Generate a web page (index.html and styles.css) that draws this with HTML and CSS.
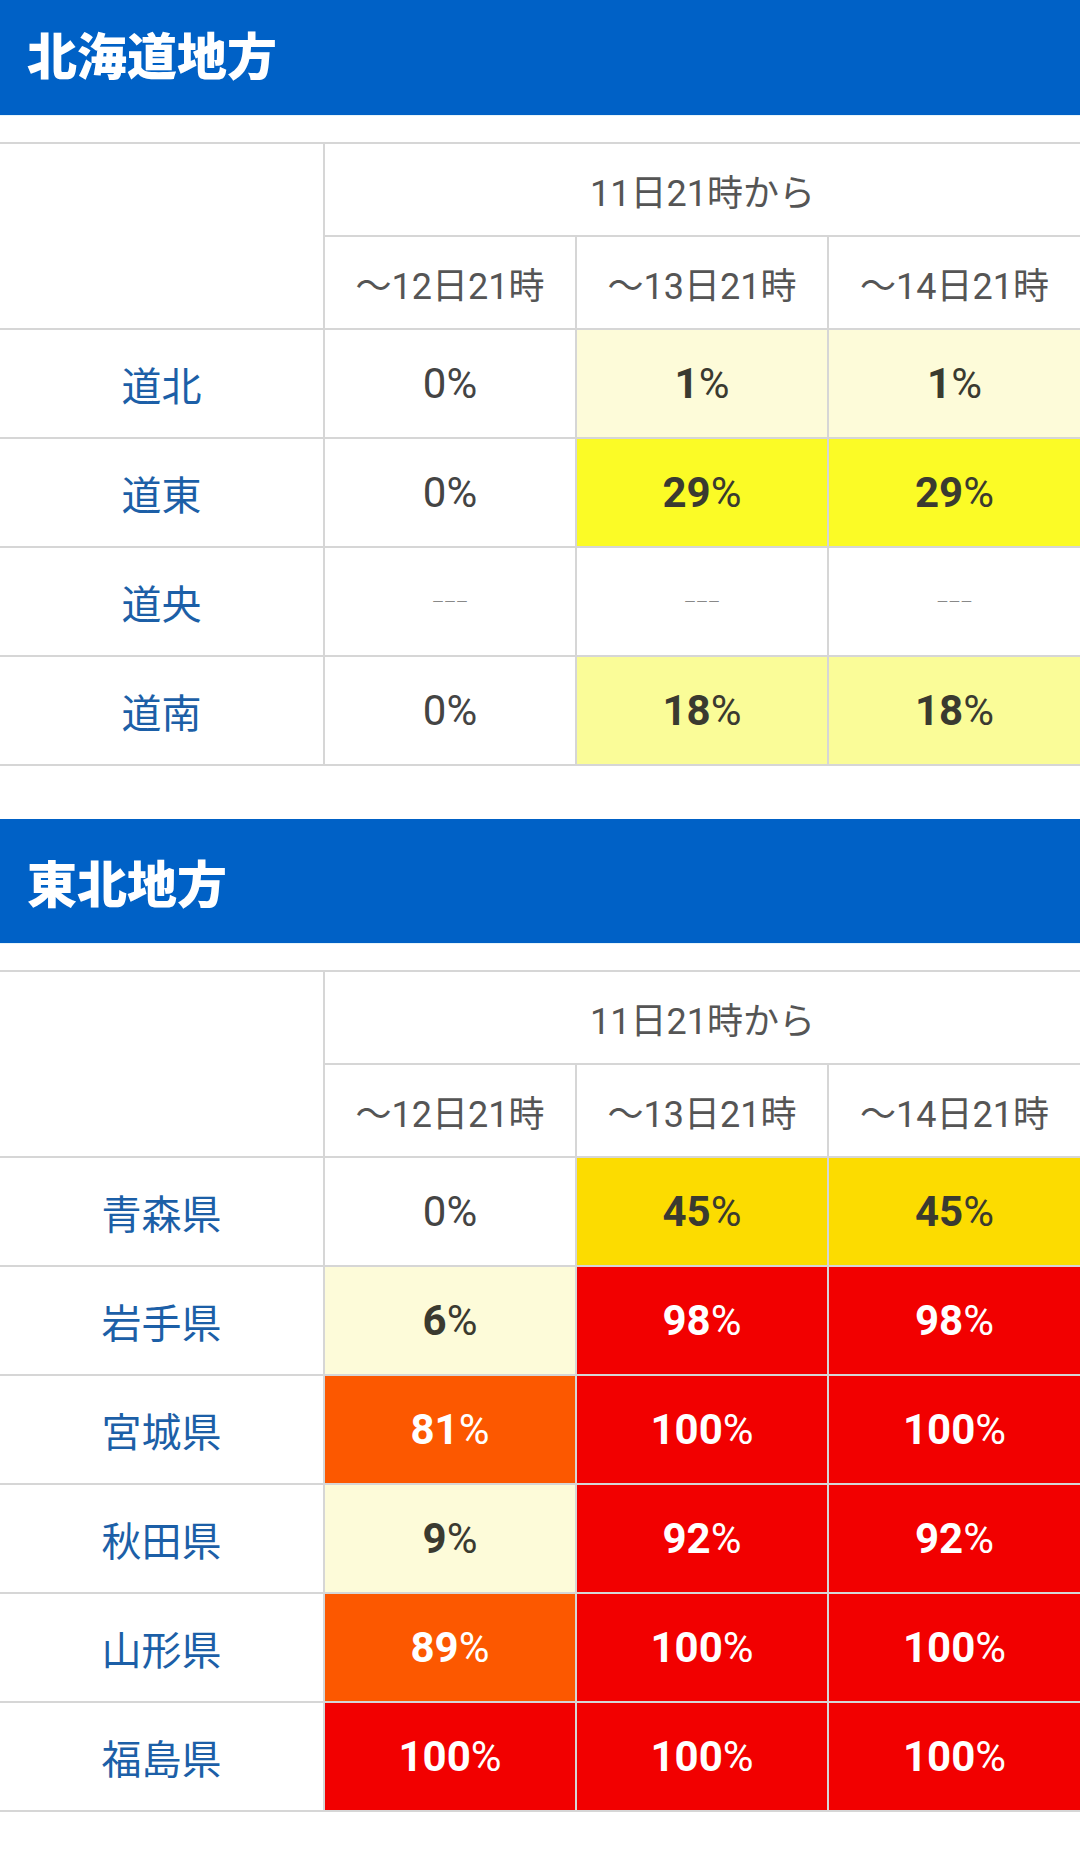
FILE: index.html
```html
<!DOCTYPE html>
<html lang="ja">
<head>
    <meta charset="UTF-8">
    <meta name="viewport" content="width=device-width, initial-scale=1.0">
    <title>地方別 確率</title>
    <link rel="stylesheet" href="styles.css">
</head>
<body>
    <div class="page">

        <!-- 北海道地方 -->
        <section class="area">
            <h2 class="area-title">北海道地方</h2>
            <table class="prob-table">
                <colgroup>
                    <col class="col-name">
                    <col><col><col>
                </colgroup>
                <thead>
                    <tr class="head-row">
                        <th rowspan="2"></th>
                        <th colspan="3">11日21時から</th>
                    </tr>
                    <tr class="head-row">
                        <th>～12日21時</th>
                        <th>～13日21時</th>
                        <th>～14日21時</th>
                    </tr>
                </thead>
                <tbody>
                    <tr>
                        <td class="name">道北</td>
                        <td class="val">0%</td>
                        <td class="val lv1"><b>1</b>%</td>
                        <td class="val lv1"><b>1</b>%</td>
                    </tr>
                    <tr>
                        <td class="name">道東</td>
                        <td class="val">0%</td>
                        <td class="val lv3"><b>29</b>%</td>
                        <td class="val lv3"><b>29</b>%</td>
                    </tr>
                    <tr>
                        <td class="name">道央</td>
                        <td class="val none">ーーー</td>
                        <td class="val none">ーーー</td>
                        <td class="val none">ーーー</td>
                    </tr>
                    <tr>
                        <td class="name">道南</td>
                        <td class="val">0%</td>
                        <td class="val lv2"><b>18</b>%</td>
                        <td class="val lv2"><b>18</b>%</td>
                    </tr>
                </tbody>
            </table>
        </section>

        <!-- 東北地方 -->
        <section class="area">
            <h2 class="area-title">東北地方</h2>
            <table class="prob-table">
                <colgroup>
                    <col class="col-name">
                    <col><col><col>
                </colgroup>
                <thead>
                    <tr class="head-row">
                        <th rowspan="2"></th>
                        <th colspan="3">11日21時から</th>
                    </tr>
                    <tr class="head-row">
                        <th>～12日21時</th>
                        <th>～13日21時</th>
                        <th>～14日21時</th>
                    </tr>
                </thead>
                <tbody>
                    <tr>
                        <td class="name">青森県</td>
                        <td class="val">0%</td>
                        <td class="val lv4"><b>45</b>%</td>
                        <td class="val lv4"><b>45</b>%</td>
                    </tr>
                    <tr>
                        <td class="name">岩手県</td>
                        <td class="val lv1"><b>6</b>%</td>
                        <td class="val lv6"><b>98</b>%</td>
                        <td class="val lv6"><b>98</b>%</td>
                    </tr>
                    <tr>
                        <td class="name">宮城県</td>
                        <td class="val lv5"><b>81</b>%</td>
                        <td class="val lv6"><b>100</b>%</td>
                        <td class="val lv6"><b>100</b>%</td>
                    </tr>
                    <tr>
                        <td class="name">秋田県</td>
                        <td class="val lv1"><b>9</b>%</td>
                        <td class="val lv6"><b>92</b>%</td>
                        <td class="val lv6"><b>92</b>%</td>
                    </tr>
                    <tr>
                        <td class="name">山形県</td>
                        <td class="val lv5"><b>89</b>%</td>
                        <td class="val lv6"><b>100</b>%</td>
                        <td class="val lv6"><b>100</b>%</td>
                    </tr>
                    <tr>
                        <td class="name">福島県</td>
                        <td class="val lv6"><b>100</b>%</td>
                        <td class="val lv6"><b>100</b>%</td>
                        <td class="val lv6"><b>100</b>%</td>
                    </tr>
                </tbody>
            </table>
        </section>

    </div>
</body>
</html>
```

FILE: styles.css
```css
body {
    margin: 0;
    padding: 0;
    background-color: #fff;
    font-family: Roboto, "Noto Sans CJK JP", sans-serif;
    color: #444;
}

.page {
    margin-top: -9px;
}

.area {
    margin-bottom: 53px;
}

.area-title {
    margin: 0 0 26px 0;
    height: 124px;
    padding-left: 27px;
    display: flex;
    align-items: center;
    background-color: #0061c6;
    color: #fff;
    font-family: "Noto Sans CJK JP", sans-serif;
    font-size: 50px;
    font-weight: 900;
    border-bottom: 1px solid #e6f4fa;
}

.prob-table {
    width: 100%;
    table-layout: fixed;
    border-collapse: collapse;
}

.col-name {
    width: 324px;
}

.prob-table th,
.prob-table td {
    border: 2px solid #d6d6d6;
    padding: 0;
    text-align: center;
}

.prob-table tr > :first-child {
    border-left: none;
}

.prob-table tr > :last-child {
    border-right: none;
}

.head-row {
    height: 93px;
}

.head-row th {
    font-weight: 400;
    font-size: 36px;
    color: #555;
}

.prob-table tbody tr {
    height: 109px;
}

.name {
    font-size: 40px;
    color: #1c5fa7;
}

.val {
    font-size: 42px;
    color: #444;
}

.val b {
    font-weight: 700;
}

.val.none {
    font-size: 12px;
    color: #888;
}

.lv1 { background-color: #fdfbd9; color: #3a3a30; }
.lv2 { background-color: #fafc98; color: #3a3a30; }
.lv3 { background-color: #fbfb26; color: #3a3a30; }
.lv4 { background-color: #fcdc00; color: #3a3a30; }
.lv5 { background-color: #fc5800; color: #fff; }
.lv6 { background-color: #f20000; color: #fff; }

.lv5, .lv6 {
    border-color: #f3c9c9;
}
```
